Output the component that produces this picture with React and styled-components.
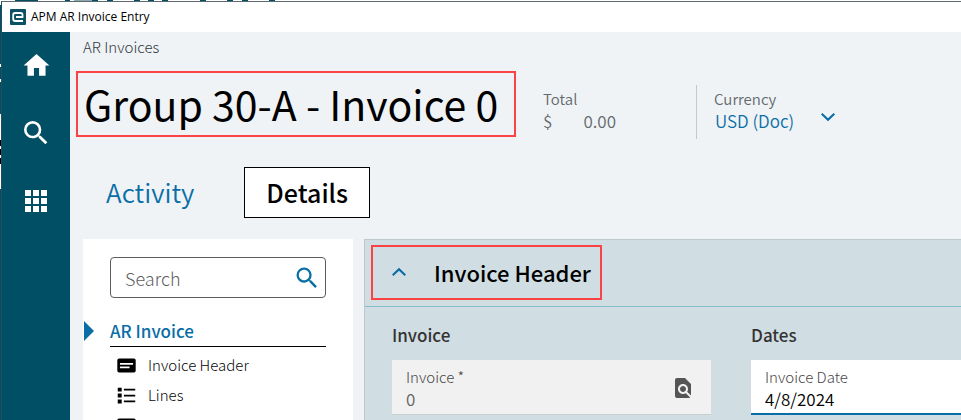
import React from "react";
import styled, { createGlobalStyle, css } from "styled-components";

const GlobalStyle = createGlobalStyle`
  *, *::before, *::after { box-sizing: border-box; }
  html, body, #root { height: 100%; }
  body { margin: 0; overflow: hidden; background: #004f64; }
  body, button, input, select {
    font-family: "Noto Sans CJK SC", "Noto Sans", sans-serif;
    font-size: 15px;
    font-weight: 350;
    line-height: 20px;
  }
  button, input, select { margin: 0; padding: 0; border: 0; background: none; color: inherit; }
  h1, h2, h3, p { margin: 0; }
  svg { display: block; flex: none; }
`;

const blue = "#0a6ea6";

const Desktop = styled.div`
  position: relative;
  height: 100%;
  min-height: 100vh;
  padding: 1px 0 0 1px;
  background: linear-gradient(#ffffff 0 5px, #004f64 5px 114px, #ffffff 114px 189px, #004f64 189px);
`;

const BackdropInk = styled.svg`
  position: absolute;
  left: 0;
  top: 0;
`;

const Window = styled.div`
  position: relative;
  display: flex;
  flex-direction: column;
  height: 100%;
  border-top: 1px solid #5c6a70;
  border-left: 1px solid #24505e;
  background: #eff3f6;
  overflow: hidden;
`;

const TitleBar = styled.header`
  display: flex;
  align-items: center;
  gap: 5px;
  flex: none;
  height: 30px;
  padding: 0 8px;
  background: #ffffff;
  color: #000000;
  font-family: "Open Sans", "Noto Sans", sans-serif;
  font-size: 12px;
  font-weight: 400;
`;

const Body = styled.div`
  display: flex;
  flex: 1;
  min-height: 0;
`;

const Rail = styled.nav`
  display: flex;
  flex-direction: column;
  align-items: center;
  gap: 36px;
  flex: none;
  width: 68px;
  padding-top: 17px;
  background: #004f64;
  color: #ffffff;
`;

const IconButton = styled.button`
  display: flex;
  align-items: center;
  justify-content: center;
  flex: none;
  width: 32px;
  height: 32px;
  color: ${(p) => p.$color || "inherit"};
  cursor: pointer;
`;

const Main = styled.main`
  display: flex;
  flex-direction: column;
  flex: 1;
  min-width: 0;
  padding-left: 13px;
`;

const Crumb = styled.a`
  align-self: flex-start;
  margin-top: 5px;
  color: #33393d;
  font-size: 15px;
  font-weight: 300;
  text-decoration: none;
`;

const Summary = styled.section`
  display: flex;
  align-items: flex-start;
  height: 67px;
  margin: 14px 0 0 -7px;
`;

const marked = css`
  border: 2px solid #fb4343;
`;

const PageTitle = styled.h1`
  ${marked}
  flex: none;
  width: 440px;
  height: 66px;
  margin-right: 27px;
  padding: 0 6px;
  color: #000000;
  font-size: 41px;
  font-weight: 400;
  line-height: 60px;
  white-space: nowrap;
`;

const Fact = styled.div`
  display: flex;
  flex-direction: column;
  flex: none;
  gap: 2px;
  margin-top: 18px;
  width: ${(p) => p.$width};
  color: #63696d;
  font-size: 15px;
`;

const Amount = styled.span`
  display: flex;
  justify-content: space-between;
  width: 73px;
  font-size: 17px;
`;

const Divider = styled.div`
  flex: none;
  width: 1px;
  height: 54px;
  margin: 14px 17px 0 0;
  background: #c3c8cb;
`;

const CurrencyField = styled.div`
  display: flex;
  align-items: flex-start;
  height: 20px;
  color: ${blue};
`;

const CurrencySelect = styled.select`
  appearance: none;
  width: 102px;
  height: 20px;
  padding-left: 1px;
  color: ${blue};
  font-size: 17px;
`;

const CurrencyArrow = styled.span`
  margin-top: -6px;
  pointer-events: none;
`;

const Tabs = styled.div`
  display: flex;
  gap: 27px;
  margin-top: 29px;
`;

const Tab = styled.button`
  height: 51px;
  padding: ${(p) => (p.$active ? "0 21px 2px" : "0 22px 2px")};
  border: 1px solid ${(p) => (p.$active ? "#000000" : "transparent")};
  background: ${(p) => (p.$active ? "#ffffff" : "transparent")};
  color: ${(p) => (p.$active ? "#000000" : blue)};
  font-size: ${(p) => (p.$active ? "25px" : "26px")};
  font-weight: ${(p) => (p.$active ? 500 : 350)};
  line-height: 32px;
  cursor: pointer;
`;

const Columns = styled.div`
  display: flex;
  gap: 11px;
  flex: 1;
  min-height: 0;
  margin-top: 21px;
`;

const SidePanel = styled.aside`
  flex: none;
  width: 270px;
  padding: 18px 27px 0;
  background: #ffffff;
`;

const SearchBox = styled.label`
  display: flex;
  align-items: center;
  height: 41px;
  padding: 0 2px 0 14px;
  border: 1px solid #5c5c5c;
  border-radius: 4px;
`;

const SearchInput = styled.input`
  flex: 1;
  min-width: 0;
  outline: 0;
  font-size: 18px;
  font-weight: 300;
  &::placeholder { color: #606060; opacity: 1; }
`;

const Group = styled.h2`
  display: flex;
  align-items: center;
  gap: 16px;
  height: 31px;
  margin: 17px 0 0 -26px;
  color: ${blue};
  font-size: 17px;
  font-weight: 500;
`;

const Outline = styled.ul`
  margin: 0;
  padding: 3px 0 0;
  border-top: 1px solid #000000;
  list-style: none;
`;

const OutlineLink = styled.a`
  display: flex;
  align-items: center;
  gap: 11px;
  height: 30px;
  padding-left: 6px;
  color: #080808;
  font-size: 15px;
  font-weight: 300;
  text-decoration: none;
  svg { color: #000000; }
`;

const Detail = styled.section`
  flex: 1;
  min-width: 0;
  border: 1px solid #bfc9cd;
  border-width: 1px 0 0 1px;
  background: #d0dde2;
`;

const DetailHead = styled.div`
  display: flex;
  align-items: flex-start;
  height: 67px;
  padding: 5px 6px;
  border-bottom: 1px solid #86bfcb;
`;

const DetailToggle = styled.button`
  ${marked}
  display: flex;
  align-items: center;
  gap: 23px;
  height: 55px;
  padding: 0 9px 2px 14px;
  color: #000000;
  font-size: 22px;
  font-weight: 500;
  line-height: 32px;
  white-space: nowrap;
  cursor: pointer;
  svg { color: ${blue}; }
`;

const Fields = styled.div`
  display: grid;
  grid-template-columns: 319px minmax(319px, 1fr);
  gap: 40px;
  padding: 18px 0 0 27px;
`;

const FieldTitle = styled.h3`
  margin-bottom: 15px;
  color: #333333;
  font-size: 17px;
  font-weight: 500;
`;

const Field = styled.div`
  display: flex;
  align-items: center;
  height: 55px;
  padding: 2px 12px 0 14px;
  border-bottom: ${(p) => (p.$locked ? "1px solid #c9cccd" : `2px solid ${blue}`)};
  background: ${(p) => (p.$locked ? "#f1f1f1" : "#ffffff")};
`;

const FieldText = styled.label`
  display: flex;
  flex-direction: column;
  gap: 2px;
  flex: 1;
  min-width: 0;
  color: #484848;
  font-size: 15px;
  font-weight: 300;
`;

const FieldInput = styled.input`
  height: 20px;
  outline: 0;
  color: ${(p) => (p.readOnly ? "#626262" : "#000000")};
  font-size: 17px;
`;

const Icon = ({ d, size = 24 }) => (
  <svg width={size} height={size} viewBox="0 0 24 24" fill="currentColor" aria-hidden="true">
    <path d={d} />
  </svg>
);

const paths = {
  home: "M10 20v-6h4v6h5v-8h3L12 3 2 12h3v8z",
  search:
    "M15.5 14h-.79l-.28-.27A6.47 6.47 0 0 0 16 9.5 6.5 6.5 0 1 0 9.5 16c1.61 0 3.09-.59 4.23-1.57l.27.28v.79l5 4.99L20.49 19zm-6 0C7.01 14 5 11.99 5 9.5S7.01 5 9.5 5 14 7.01 14 9.5 11.99 14 9.5 14",
  apps: "M1 1h6v6H1zm8 0h6v6H9zm8 0h6v6h-6zM1 9h6v6H1zm8 0h6v6H9zm8 0h6v6h-6zM1 17h6v6H1zm8 0h6v6H9zm8 0h6v6h-6z",
  down: "M6.4 8 12 13.3 17.600 8 19 9.400l-7 6.800-7-6.800z",
  up: "M6.400 16 12 10.700l5.600 5.300L19 14.600l-7-6.800-7 6.800z",
  card: "M3.500 4h17A2 2 0 0 1 22.500 6v12a2 2 0 0 1-2 2h-17a2 2 0 0 1-2-2V6a2 2 0 0 1 2-2zM4.500 9v2h15V9zm0 4v2h11v-2z",
  list: "M2 3h4.500v4.500H2zm0 6.750h4.500v4.500H2zm0 6.750h4.500V21H2zM9 4.300h13v2H9zm0 6.700h13v2H9zm0 6.700h13v2H9z",
  lookup:
    "M20 19.590V8l-6-6H6c-1.100 0-1.990.900-1.990 2L4 20c0 1.100.890 2 1.990 2H18c.450 0 .850-.150 1.190-.400l-4.430-4.430c-.800.520-1.740.830-2.760.830-2.760 0-5-2.240-5-5s2.240-5 5-5 5 2.240 5 5c0 1.020-.310 1.960-.830 2.750zM9 13c0 1.660 1.340 3 3 3s3-1.340 3-3-1.340-3-3-3-3 1.340-3 3",
};

const Logo = () => (
  <svg width="16" height="16" viewBox="0 0 16 16" aria-hidden="true">
    <rect width="16" height="16" rx="1" fill="#0b5265" />
    <path d="M6 8H12.500V5.800Q12.500 4 10.700 4H5Q3.200 4 3.200 5.800V10Q3.200 12 5.200 12H13" fill="none" stroke="#fff" strokeWidth="1.800" />
  </svg>
);

const Marker = () => (
  <svg width="10" height="20" viewBox="0 0 10 20" aria-hidden="true">
    <path d="M0 0 10 10 0 20z" fill={blue} />
  </svg>
);

const outline = [
  { label: "Invoice Header", icon: paths.card },
  { label: "Lines", icon: paths.list },
  { label: "", icon: paths.card },
];

export default function App() {
  return (
    <Desktop>
      <GlobalStyle />
      <BackdropInk width="300" height="200" aria-hidden="true">
        <path d="M15 0h23v1H15zM65 0h5v1h-5zM92 0h6v1h-6zM107 0h6v1h-6zM134 0h6v1h-6zM148 0h6v1h-6zM162 0h6v1h-6zM200 0h6v1h-6zM227 0h6v1h-6zM242 0h6v1h-6zM269 0h6v1h-6z" fill="#004f64" />
        <path d="M74 0h18v1H74z" fill="#8fa7b0" />
        <path d="M0 64h1v3H0zM0 79h1v3H0z" fill="#fff" />
        <path d="M0 140h1v6H0zM0 149h1v6H0zM0 158h1v6H0z" fill="#000" />
      </BackdropInk>
      <Window>
        <TitleBar>
          <Logo />
          APM AR Invoice Entry
        </TitleBar>
        <Body>
          <Rail aria-label="Main">
            <IconButton aria-label="Home"><Icon d={paths.home} size={31} /></IconButton>
            <IconButton aria-label="Search"><Icon d={paths.search} size={32} /></IconButton>
            <IconButton aria-label="Apps"><Icon d={paths.apps} /></IconButton>
          </Rail>
          <Main>
            <Crumb href="#invoices">AR Invoices</Crumb>
            <Summary>
              <PageTitle>Group 30-A - Invoice 0</PageTitle>
              <Fact $width="153px">
                <span>Total</span>
                <Amount><span>$</span><span>0.00</span></Amount>
              </Fact>
              <Divider />
              <Fact $width="130px">
                <label htmlFor="currency">Currency</label>
                <CurrencyField>
                  <CurrencySelect id="currency"><option>USD (Doc)</option></CurrencySelect>
                  <CurrencyArrow><Icon d={paths.down} /></CurrencyArrow>
                </CurrencyField>
              </Fact>
            </Summary>
            <Tabs role="tablist">
              <Tab role="tab" aria-selected="false">Activity</Tab>
              <Tab role="tab" aria-selected="true" $active>Details</Tab>
            </Tabs>
            <Columns>
              <SidePanel>
                <SearchBox>
                  <SearchInput type="text" placeholder="Search" aria-label="Search sections" />
                  <IconButton type="button" aria-label="Run search" $color={blue}>
                    <Icon d={paths.search} size={28} />
                  </IconButton>
                </SearchBox>
                <Group><Marker />AR Invoice</Group>
                <Outline>
                  {outline.map((item, i) => (
                    <li key={i}>
                      <OutlineLink href="#section">
                        <Icon d={item.icon} size={21} />
                        {item.label}
                      </OutlineLink>
                    </li>
                  ))}
                </Outline>
              </SidePanel>
              <Detail>
                <DetailHead>
                  <DetailToggle aria-expanded="true">
                    <Icon d={paths.up} />
                    Invoice Header
                  </DetailToggle>
                </DetailHead>
                <Fields>
                  <div>
                    <FieldTitle>Invoice</FieldTitle>
                    <Field $locked>
                      <FieldText>Invoice *<FieldInput defaultValue="0" readOnly /></FieldText>
                      <IconButton aria-label="Look up invoice" $color="#555555">
                        <Icon d={paths.lookup} />
                      </IconButton>
                    </Field>
                  </div>
                  <div>
                    <FieldTitle>Dates</FieldTitle>
                    <Field>
                      <FieldText>Invoice Date<FieldInput defaultValue="4/8/2024" /></FieldText>
                    </Field>
                  </div>
                </Fields>
              </Detail>
            </Columns>
          </Main>
        </Body>
      </Window>
    </Desktop>
  );
}
